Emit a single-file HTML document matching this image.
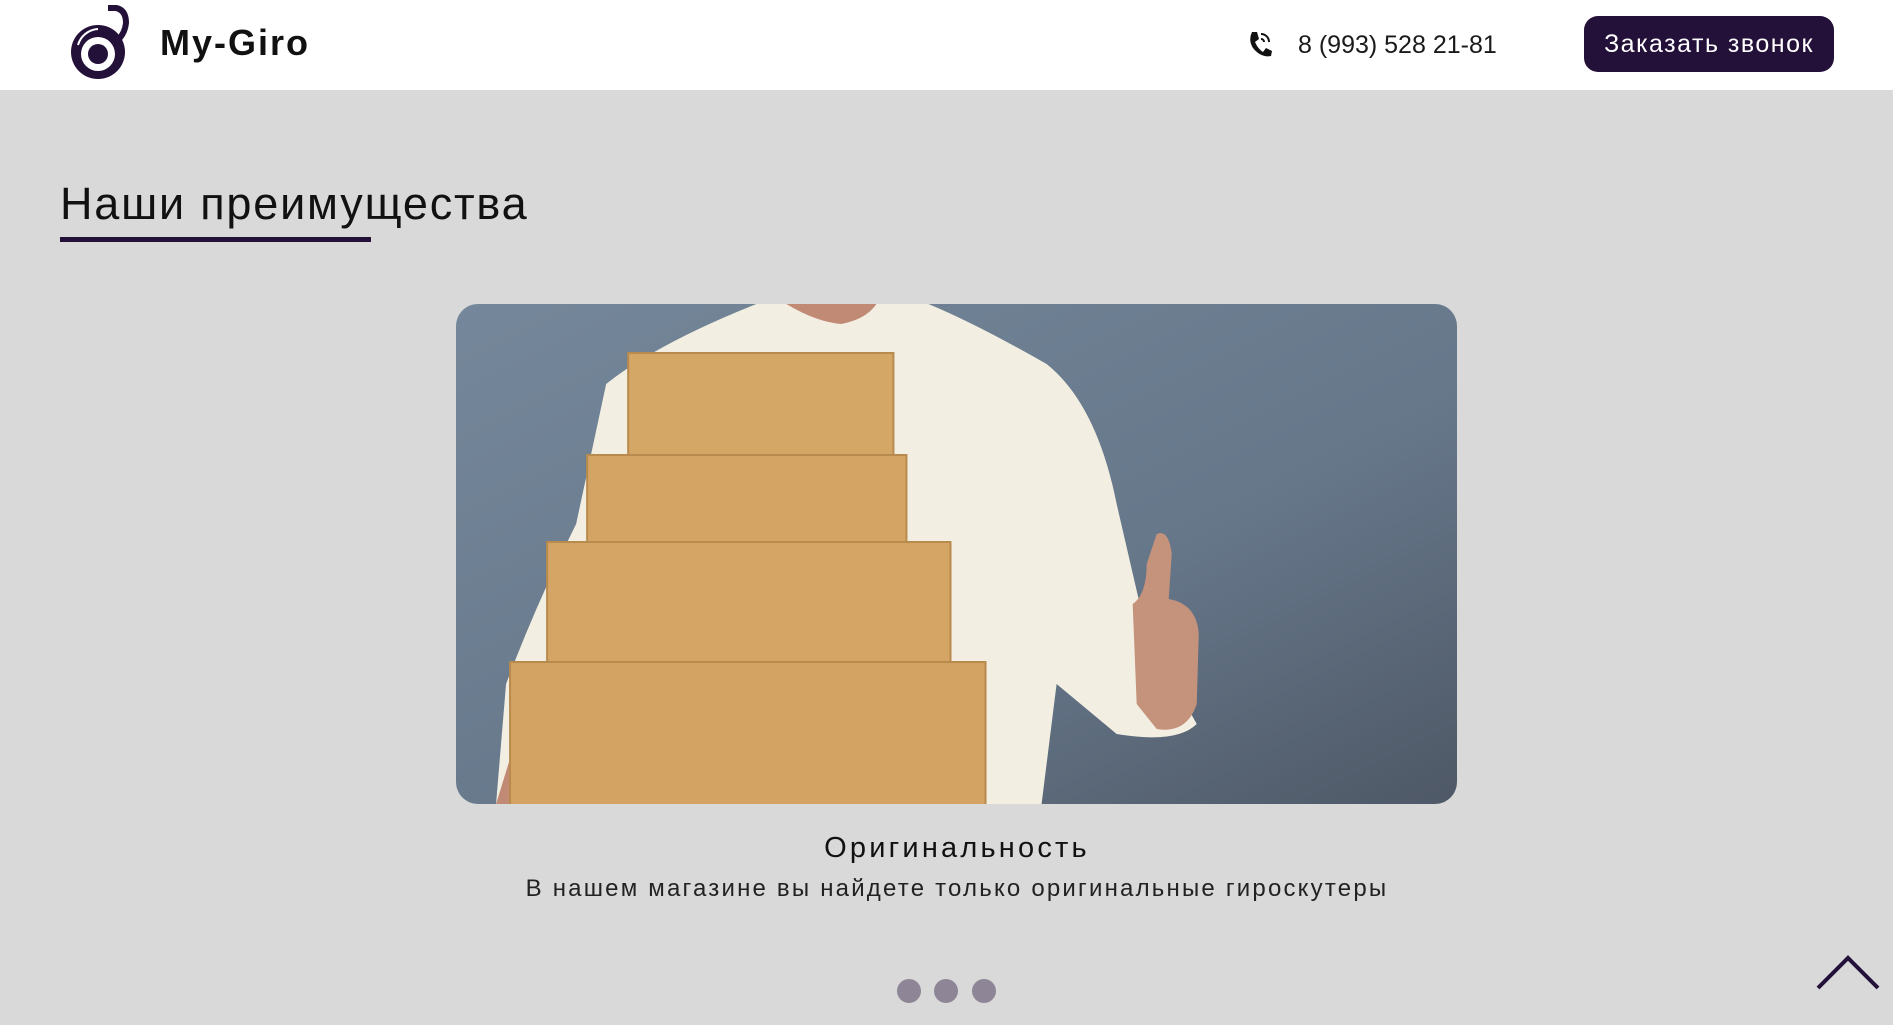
<!DOCTYPE html>
<html><head><meta charset="utf-8"><style>
*{margin:0;padding:0;box-sizing:border-box}
body{width:1893px;height:1025px;overflow:hidden;background:#d9d9d9;font-family:"Liberation Sans",sans-serif;color:#111;position:relative}
header{position:absolute;left:0;top:0;width:1893px;height:90px;background:#fff}
.brand{position:absolute;left:160px;top:22px;font-size:36px;font-weight:bold;color:#111;letter-spacing:2px}
.phone{position:absolute;left:1298px;top:31px;font-size:25px;color:#1a1a1a}
.btn{position:absolute;left:1584px;top:16px;width:250px;height:56px;background:#24113a;border-radius:14px;color:#fff;font-size:25px;text-align:center;line-height:56px;letter-spacing:1.5px}
h2{position:absolute;left:60px;top:178px;font-size:45px;font-weight:normal;color:#111;letter-spacing:1.8px}
.ul{position:absolute;left:60px;top:237px;width:311px;height:5px;background:#24113a}
.img{position:absolute;left:456px;top:304px;width:1001px;height:500px;border-radius:22px;overflow:hidden}
.t1{position:absolute;left:0;width:1914px;top:832px;text-align:center;font-size:29px;color:#111;letter-spacing:3.2px}
.t2{position:absolute;left:0;width:1914px;top:875px;text-align:center;font-size:24px;color:#222;letter-spacing:2.2px}
.dot{position:absolute;top:979px;width:24px;height:24px;border-radius:50%;background:#8e8696}
</style></head><body>
<header>
<svg style="position:absolute;left:64px;top:5px" width="68" height="78" viewBox="0 0 68 78">
<path d="M44 3 H52 Q62 5 62 18 Q61 28 54 35" fill="none" stroke="#24113a" stroke-width="6"/>
<circle cx="34" cy="47" r="27" fill="#24113a"/>
<circle cx="34" cy="49" r="17" fill="#fff"/>
<circle cx="34" cy="49" r="10" fill="#24113a"/>
<path d="M14 40 A22 22 0 0 1 34 24" fill="none" stroke="#fff" stroke-width="2"/>
</svg>
<div class="brand">My-Giro</div>
<svg style="position:absolute;left:1247px;top:30px" width="26" height="28" viewBox="0 0 26 28">
<path d="M5 2 L10 2 L12 9 L8 12 Q11 19 16 22 L19 18 L25 21 L24 26 Q14 28 6 18 Q1 10 5 2Z" fill="#111"/>
<path d="M14 4 A8 8 0 0 1 22 12 M14 9 A3 3 0 0 1 17 12" fill="none" stroke="#111" stroke-width="2"/>
</svg>
<div class="phone">8 (993) 528 21-81</div>
<div class="btn">Заказать звонок</div>
</header>
<h2>Наши преимущества</h2>
<div class="ul"></div>
<div class="img">
<svg width="1001" height="500" viewBox="0 0 1000 500" preserveAspectRatio="none">
<defs>
<linearGradient id="bg" x1="0" y1="0" x2="1" y2="1"><stop offset="0" stop-color="#75879a"/><stop offset="0.6" stop-color="#66778a"/><stop offset="1" stop-color="#4e5866"/></linearGradient>
</defs>
<rect width="1000" height="500" fill="url(#bg)"/>
<path d="M300 0 L472 0 Q520 20 590 60 Q640 100 660 200 L690 330 L740 420 Q720 440 660 430 L600 380 L585 500 L40 500 L50 380 Q80 300 120 220 L150 80 Q200 40 300 0Z" fill="#f2efe2"/>
<path d="M330 0 Q360 18 385 20 Q410 15 420 0Z" fill="#c08a74"/>
<path d="M700 230 Q712 225 715 250 L712 295 Q740 300 742 330 L740 400 Q730 430 700 425 L680 400 L676 300 Q690 290 690 260Z" fill="#c5927c"/>
<path d="M60 435 L80 420 L80 500 L40 500Z" fill="#c08a74"/>
<g stroke="#b98a4d" stroke-width="2">
<rect x="172" y="49" width="265" height="104" fill="#d5a766"/>
<rect x="131" y="151" width="319" height="103" fill="#d3a463"/>
<rect x="91" y="238" width="403" height="171" fill="#d4a564"/>
<rect x="54" y="358" width="475" height="150" fill="#d3a363"/>
</g>
</svg>
</div>
<div class="t1">Оригинальность</div>
<div class="t2">В нашем магазине вы найдете только оригинальные гироскутеры</div>
<div class="dot" style="left:897px"></div>
<div class="dot" style="left:934px"></div>
<div class="dot" style="left:972px"></div>
<svg style="position:absolute;left:1815px;top:952px" width="66" height="40" viewBox="0 0 66 40">
<path d="M3 36 L33 6 L63 36" fill="none" stroke="#24113a" stroke-width="4"/>
</svg>
</body></html>
